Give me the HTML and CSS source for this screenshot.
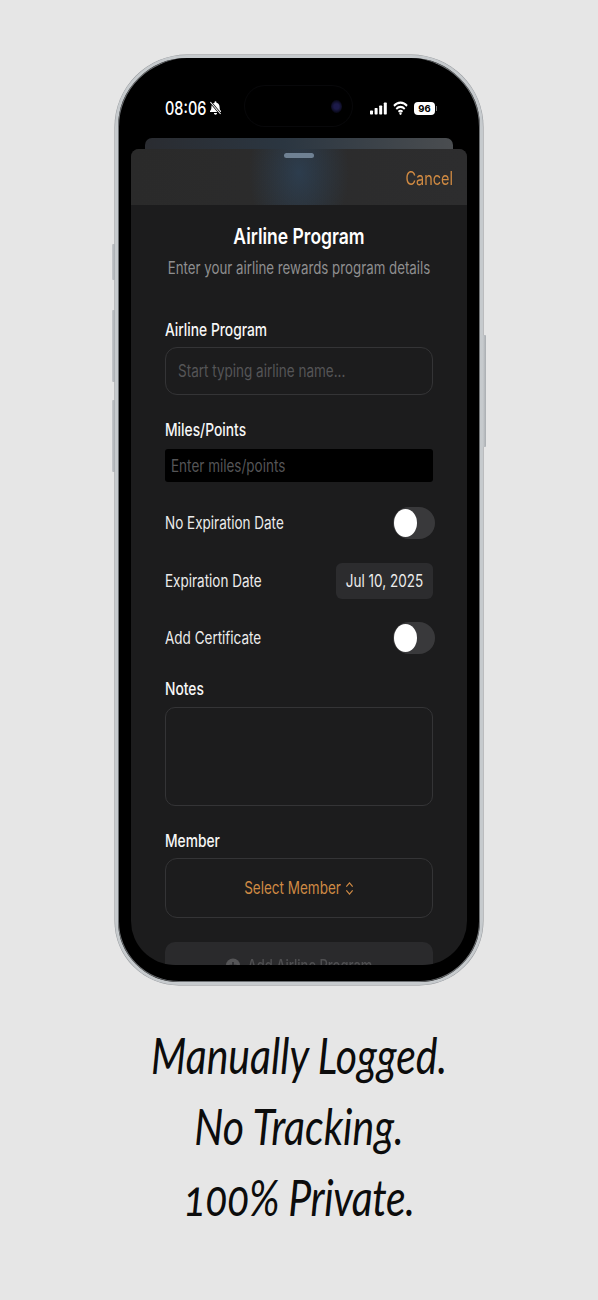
FILE: index.html
```html
<!DOCTYPE html>
<html lang="en">
<head>
<meta charset="utf-8">
<title>Airline Program</title>
<link rel="stylesheet" href="styles.css">
</head>
<body>
<main class="page">
  <div class="phone">
    <span class="side-btn btn-a"></span>
    <span class="side-btn btn-b"></span>
    <span class="side-btn btn-c"></span>
    <span class="side-btn btn-d"></span>
    <div class="screen">
      <div class="island"><span class="camera"></span></div>
      <div class="status">
        <div class="status-left">
          <span class="time tall">08:06</span>
          <svg class="bell" viewBox="0 0 14 16" aria-hidden="true">
            <path d="M7 .8c.6 0 1 .4 1 1v.5c2.200.5 3.400 2.300 3.400 4.600 0 2.200.5 3.300 1.500 4.300v1H1.100v-1c1-1 1.500-2.100 1.500-4.300C2.600 4.600 3.800 2.800 6 2.300v-.5c0-.6.4-1 1-1zM5.300 13.500h3.400C8.600 14.600 7.900 15.200 7 15.200s-1.600-.6-1.700-1.700z" fill="#fff"/>
            <path d="M1.500 1.500l11 13" stroke="#000" stroke-width="2.600"/>
            <path d="M1.500 1.500l11 13" stroke="#fff" stroke-width="1.100"/>
          </svg>
        </div>
        <div class="status-right">
          <svg class="signal" viewBox="0 0 17 12" aria-hidden="true">
            <rect x="0" y="8" width="3" height="4" rx=".7"/>
            <rect x="4.600" y="5.500" width="3" height="6.500" rx=".7"/>
            <rect x="9.200" y="3" width="3" height="9" rx=".7"/>
            <rect x="13.800" y="0" width="3" height="12" rx=".7"/>
          </svg>
          <svg class="wifi" viewBox="0 0 16 12" preserveAspectRatio="none" aria-hidden="true">
            <path d="M1 4.200a10 10 0 0 1 14 0M3.500 6.900a6.400 6.400 0 0 1 9 0M5.900 9.300a3 3 0 0 1 4.200 0" fill="none" stroke="#fff" stroke-width="1.900"/>
            <circle cx="8" cy="10.800" r="1.200" fill="#fff"/>
          </svg>
          <div class="battery"><span class="battery-level">96</span></div>
        </div>
      </div>
      <div class="back-card"></div>
      <section class="sheet">
        <header class="sheet-head">
          <span class="handle"></span>
          <span class="cancel tall">Cancel</span>
        </header>
        <div class="sheet-body">
          <h1 class="title tall">Airline Program</h1>
          <p class="subtitle tall">Enter your airline rewards program details</p>

          <div class="label first tall">Airline Program</div>
          <div class="field outlined"><span class="placeholder tall">Start typing airline name...</span></div>

          <div class="label tall">Miles/Points</div>
          <div class="field solid"><span class="placeholder tall">Enter miles/points</span></div>

          <div class="row row-a">
            <span class="row-text tall">No Expiration Date</span>
            <span class="toggle"><span class="knob"></span></span>
          </div>
          <div class="row row-b">
            <span class="row-text tall">Expiration Date</span>
            <span class="date"><span class="tall">Jul 10, 2025</span></span>
          </div>
          <div class="row row-c">
            <span class="row-text tall">Add Certificate</span>
            <span class="toggle"><span class="knob"></span></span>
          </div>

          <div class="label tall">Notes</div>
          <div class="notes"></div>

          <div class="label tall">Member</div>
          <div class="select">
            <span class="select-text tall">Select Member</span>
            <svg class="chevrons" viewBox="0 0 10 16" aria-hidden="true">
              <path d="M1.500 6L5 1.800 8.500 6M1.500 10L5 14.200 8.500 10" fill="none" stroke="#cf8a44" stroke-width="1.300"/>
            </svg>
          </div>

          <div class="submit">
            <svg class="plus" viewBox="0 0 14 14" aria-hidden="true">
              <circle cx="7" cy="7" r="7" fill="#555557"/>
              <path d="M7 3.500v7M3.500 7h7" stroke="#2a2a2c" stroke-width="1.500"/>
            </svg>
            <span class="submit-text tall">Add Airline Program</span>
          </div>
        </div>
      </section>
    </div>
  </div>
  <h2 class="caption">Manually Logged.<br>No Tracking.<br><span class="caption-last">100% Private.</span></h2>
</main>
</body>
</html>
```
FILE: styles.css
```css
* { box-sizing: border-box; }
html, body { margin: 0; padding: 0; }
body {
  width: 598px;
  height: 1300px;
  overflow: hidden;
  background: #e6e6e6;
  font-family: Inter, Roboto, "Liberation Sans", sans-serif;
}
.page {
  display: flex;
  flex-direction: column;
  align-items: center;
  padding-top: 55px;
}
.tall { display: inline-block; transform: scaleY(1.25); }

/* Device */
.phone {
  position: relative;
  width: 368px;
  height: 930px;
  padding: 0 13px 17px;
  border: 3px solid #c6cacd;
  border-radius: 72px 72px 64px 64px;
  background: #000;
  box-shadow: inset 0 0 0 1px #6d7073, 0 0 0 .5px #8f9296;
}
.side-btn {
  position: absolute;
  width: 3px;
  background: linear-gradient(90deg, #c6c9cc, #a9adb1);
  border-radius: 1px;
}
.btn-a { left: -6px; top: 186px; height: 36px; }
.btn-b { left: -6px; top: 252px; height: 72px; }
.btn-c { left: -6px; top: 342px; height: 72px; }
.btn-d { right: -6px; top: 277px; height: 112px; }

.screen {
  position: relative;
  height: 907px;
  overflow: hidden;
  background: #000;
  border-radius: 56px 56px 44px 44px;
  filter: blur(.3px);
}
.island {
  position: absolute;
  left: 114px;
  top: 28px;
  width: 107px;
  height: 40px;
  border-radius: 20px;
  background: #000;
  box-shadow: 0 0 0 1px #08080a;
}
.camera {
  position: absolute;
  right: 10px;
  top: 14px;
  width: 11px;
  height: 13px;
  border-radius: 50%;
  background: radial-gradient(circle, #1c1a4a 0 30%, #09091a 70%);
}

/* Status bar */
.status {
  position: relative;
  display: flex;
  justify-content: space-between;
  align-items: center;
  height: 80px;
  padding: 20px 32px 0 34px;
  color: #fff;
}
.status-left { display: flex; align-items: center; gap: 3px; }
.time { font-size: 14.500px; font-weight: 500; }
.bell { width: 13px; height: 16px; }
.status-right { display: flex; align-items: center; gap: 6px; }
.signal { width: 17px; height: 13px; fill: #fff; }
.wifi { width: 15px; height: 14px; }
.battery {
  position: relative;
  width: 21px;
  height: 13px;
  border-radius: 4px;
  background: #fff;
  display: flex;
  align-items: center;
  justify-content: center;
}
.battery::after {
  content: "";
  position: absolute;
  right: -2px;
  top: 4px;
  width: 1px;
  height: 5px;
  background: #777;
}
.battery-level { font-size: 9.500px; font-weight: 700; color: #000; }
.back-card {
  height: 11px;
  margin: 0 14px;
  border-radius: 7px 7px 0 0;
  background: linear-gradient(90deg, #2a2c31, #2b3641 45%, #4a4d50 100%);
}

/* Sheet */
.sheet {
  border-radius: 8px 8px 0 0;
  background: #1c1c1d;
  overflow: hidden;
}
.sheet-head {
  position: relative;
  display: flex;
  justify-content: flex-end;
  align-items: center;
  height: 56px;
  padding: 2px 14px 0 0;
  background:
    radial-gradient(ellipse 50px 75px at 50% 42%, rgba(45, 75, 105, .55), rgba(45, 75, 105, 0)),
    linear-gradient(90deg, #2a2a2a, #2d2d2e);
}
.handle {
  position: absolute;
  left: 153px;
  top: 4px;
  width: 30px;
  height: 5px;
  border-radius: 3px;
  background: #6f8193;
}
.cancel { font-size: 14.500px; color: #d08a42; }
.sheet-body { padding: 19px 34px 0; }
.title {
  display: block;
  margin: 0;
  height: 24px;
  line-height: 24px;
  text-align: center;
  color: #fff;
  font-size: 17.500px;
  font-weight: 600;
}
.subtitle {
  display: block;
  margin: 10px 0 0;
  height: 20px;
  line-height: 20px;
  text-align: center;
  color: #8f8f90;
  font-size: 13.300px;
  white-space: nowrap;
}
.label {
  display: block;
  margin-top: 25px;
  height: 20px;
  line-height: 20px;
  color: #f6f6f6;
  font-size: 13.800px;
  font-weight: 500;
}
.label.first { margin-top: 42px; }
.field { display: flex; align-items: center; }
.outlined {
  height: 48px;
  margin-top: 7px;
  padding-left: 12px;
  border: 1px solid #343436;
  border-radius: 12px;
}
.solid {
  height: 33px;
  margin-top: 9px;
  padding-left: 6px;
  border-radius: 3px;
  background: #000;
}
.placeholder { color: #555557; font-size: 13.500px; }
.row {
  display: flex;
  justify-content: space-between;
  align-items: center;
  color: #ececec;
  font-size: 13.500px;
}
.row-a { height: 32px; margin-top: 25px; }
.row-b { height: 36px; margin-top: 24px; }
.row-c { height: 32px; margin-top: 23px; }
.toggle {
  position: relative;
  width: 42px;
  height: 32px;
  margin-right: -2px;
  border-radius: 16px;
  background: #39393b;
}
.knob {
  position: absolute;
  left: 1px;
  top: 2px;
  width: 23px;
  height: 28px;
  border-radius: 50%;
  background: #fff;
}
.date {
  display: flex;
  align-items: center;
  justify-content: center;
  width: 97px;
  height: 36px;
  border-radius: 6px;
  background: #2c2c2e;
  color: #ececec;
  font-size: 13.500px;
}
.notes {
  height: 99px;
  margin-top: 8px;
  border: 1px solid #343436;
  border-radius: 10px;
}
.select {
  display: flex;
  align-items: center;
  justify-content: center;
  gap: 4px;
  height: 60px;
  margin-top: 7px;
  border: 1px solid #343436;
  border-radius: 12px;
}
.select-text { color: #cf8a44; font-size: 13.500px; }
.chevrons { width: 9px; height: 15px; }
.submit {
  display: flex;
  align-items: center;
  justify-content: center;
  gap: 8px;
  height: 46px;
  margin-top: 24px;
  border-radius: 10px;
  background: #2a2a2c;
}
.plus { width: 14px; height: 15px; }
.submit-text { color: #4f4f51; font-size: 13px; font-weight: 500; }

/* Caption */
.caption {
  margin: 35px 0 0;
  text-align: center;
  color: #0c0c0c;
  font-family: Lato, sans-serif;
  font-style: italic;
  font-weight: 400;
  font-size: 41px;
  line-height: 56.800px;
  font-variant-numeric: oldstyle-nums;
  transform: scaleY(1.25);
  transform-origin: top center;
}
.caption-last { letter-spacing: -.4px; }
```
